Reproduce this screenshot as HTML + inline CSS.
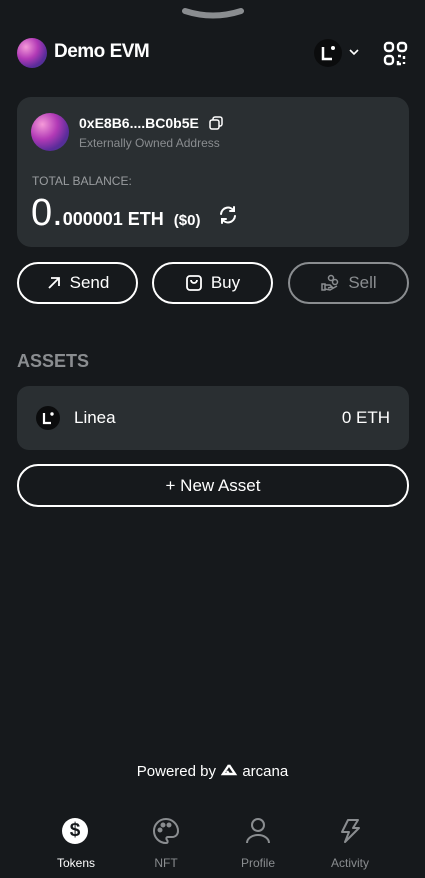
<!DOCTYPE html><html><head><style>
*{margin:0;padding:0;box-sizing:border-box}
body{width:425px;height:878px;background:#16191c;font-family:"Liberation Sans",sans-serif;color:#fff;position:relative;overflow:hidden}
.a{position:absolute}
.av{border-radius:50%;background:radial-gradient(circle at 30% 30%,#f59ad9,#b23ab6 40%,#5a2c9a 70%,#3b3f88)}
.btn{position:absolute;top:262px;height:42px;border:2px solid #fff;border-radius:21px;display:flex;align-items:center;justify-content:center;font-size:17px;gap:8px}
.nav{position:absolute;top:856px;width:80px;text-align:center;font-size:12px;color:#8a8d90}
</style></head><body>
<svg class="a" style="left:182px;top:6px" width="62" height="14"><path d="M3 5 Q31 14 59 5" stroke="#8a8d90" stroke-width="6" fill="none" stroke-linecap="round"/></svg>
<div class="a av" style="left:17px;top:38px;width:30px;height:30px"></div>
<div class="a" style="left:54px;top:41px;font-size:19px;font-weight:bold;letter-spacing:-0.5px">Demo EVM</div>
<div class="a" style="left:314px;top:39px;width:28px;height:28px;border-radius:50%;background:#0b0c0d"></div>
<svg class="a" style="left:314px;top:39px" width="28" height="28"><path d="M9 8v12h9" stroke="#fff" stroke-width="2.5" fill="none"/><circle cx="19" cy="9" r="2" fill="#fff"/></svg>
<svg class="a" style="left:348px;top:48px" width="12" height="8"><path d="M2 2l4 4 4-4" stroke="#fff" stroke-width="1.6" fill="none"/></svg>
<svg class="a" style="left:383px;top:41px" width="25" height="25" fill="none" stroke="#fff" stroke-width="2.4"><rect x="2" y="2" width="8" height="8" rx="3"/><rect x="15" y="2" width="8" height="8" rx="3"/><rect x="2" y="15" width="8" height="8" rx="3"/><path d="M15 15h3M21 15v3M15 20v3h3M21 21v2"/></svg>
<div class="a" style="left:17px;top:97px;width:392px;height:150px;background:#2a2f32;border-radius:14px"></div>
<div class="a av" style="left:31px;top:113px;width:38px;height:38px"></div>
<div class="a" style="left:79px;top:115px;font-size:14px;font-weight:bold">0xE8B6....BC0b5E</div>
<svg class="a" style="left:209px;top:116px" width="14" height="14" fill="none" stroke="#fff" stroke-width="1.5"><rect x="4" y="1" width="9" height="9" rx="2"/><rect x="1" y="4" width="9" height="9" rx="2" fill="#2a2f32"/></svg>
<div class="a" style="left:79px;top:136px;font-size:12px;color:#8a8d90">Externally Owned Address</div>
<div class="a" style="left:32px;top:174px;font-size:12px;color:#9a9da0">TOTAL BALANCE:</div>
<div class="a" style="left:31px;top:192px;font-size:38px;white-space:nowrap">0.<span style="font-size:18px;font-weight:bold">000001 ETH &nbsp;<span style="font-size:15px">($0)</span></span></div>
<svg class="a" style="left:217px;top:204px" width="22" height="22" fill="none" stroke="#fff" stroke-width="2" stroke-linecap="round"><path d="M4 10a7 7 0 0 1 13-3M18 12a7 7 0 0 1-13 3"/><path d="M17 3v4h-4M5 19v-4h4"/></svg>
<div class="btn" style="left:17px;width:121px"><svg width="16" height="16" stroke="#fff" stroke-width="1.8" fill="none"><path d="M3 13L13 3M5 3h8v8"/></svg>Send</div>
<div class="btn" style="left:152px;width:121px"><svg width="18" height="18" stroke="#fff" stroke-width="1.8" fill="none"><rect x="2" y="2" width="14" height="14" rx="3"/><path d="M6 6a3 3 0 0 0 6 0"/></svg>Buy</div>
<div class="btn" style="left:288px;width:121px;border-color:#8a8d90;color:#8a8d90"><svg width="20" height="18" stroke="#8a8d90" stroke-width="1.5" fill="none"><circle cx="11" cy="4" r="2.5"/><circle cx="15" cy="8" r="2.5"/><path d="M2 10h3v6H2zM5 11h5l2 2-4 1M5 15l5 1 7-4"/></svg>Sell</div>
<div class="a" style="left:17px;top:351px;font-size:18px;font-weight:bold;color:#8a8d90">ASSETS</div>
<div class="a" style="left:17px;top:386px;width:392px;height:64px;background:#2a2f32;border-radius:12px"></div>
<div class="a" style="left:36px;top:406px;width:24px;height:24px;border-radius:50%;background:#0b0c0d"></div>
<svg class="a" style="left:36px;top:406px" width="24" height="24"><path d="M8 7v10h7" stroke="#fff" stroke-width="2.2" fill="none"/><circle cx="16" cy="8" r="1.7" fill="#fff"/></svg>
<div class="a" style="left:74px;top:408px;font-size:17px">Linea</div>
<div class="a" style="right:35px;top:408px;font-size:17px">0 ETH</div>
<div class="btn" style="left:17px;top:464px;width:392px;height:43px">+ New Asset</div>
<div class="a" style="left:0;width:425px;top:763px;text-align:center;font-size:15px">Powered by <svg width="18" height="14" style="vertical-align:-1px" fill="none" stroke="#fff" stroke-width="2.4"><path d="M9 2L3 11h6l-2-3M9 2l6 9H9"/></svg> arcana</div>
<div class="a" style="left:62px;top:818px;width:26px;height:26px;border-radius:50%;background:#fff;color:#16191c;font-size:19px;font-weight:bold;text-align:center;line-height:26px">$</div>
<svg class="a" style="left:152px;top:817px" width="28" height="28" fill="none" stroke="#8a8d90" stroke-width="2"><path d="M14 2a12 12 0 1 0 0 24c2 0 2-2 1-3s-1-3 1-3h4c4 0 6-3 6-6 0-7-6-12-12-12z"/><circle cx="8" cy="13" r="1.5" fill="#8a8d90"/><circle cx="11" cy="8" r="1.5" fill="#8a8d90"/><circle cx="17" cy="8" r="1.5" fill="#8a8d90"/></svg>
<svg class="a" style="left:245px;top:817px" width="26" height="28" fill="none" stroke="#8a8d90" stroke-width="2"><circle cx="13" cy="8" r="6"/><path d="M2 26a11 8 0 0 1 22 0"/></svg>
<svg class="a" style="left:339px;top:818px" width="22" height="26" fill="none" stroke="#8a8d90" stroke-width="2" stroke-linejoin="round"><path d="M9 2h10l-5 8h6L6 24l4-10H3z"/></svg>
<div class="nav" style="left:36px;color:#fff">Tokens</div>
<div class="nav" style="left:126px">NFT</div>
<div class="nav" style="left:218px">Profile</div>
<div class="nav" style="left:310px">Activity</div>
</body></html>
